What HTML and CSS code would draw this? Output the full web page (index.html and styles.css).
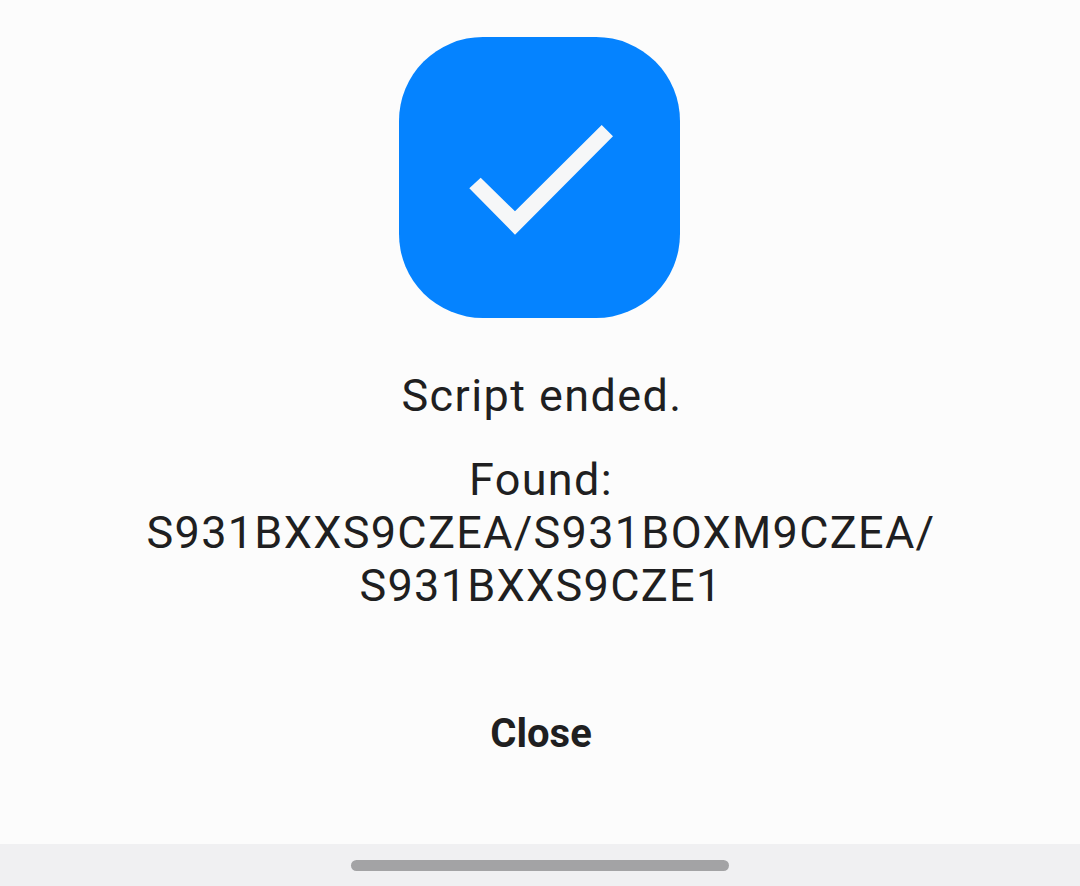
FILE: index.html
```html
<!DOCTYPE html>
<html lang="en">
<head>
<meta charset="utf-8">
<title>Script ended</title>
<link rel="stylesheet" href="styles.css">
</head>
<body>
<main class="dialog">
  <svg class="badge" width="281" height="281" viewBox="0 0 281 281" aria-hidden="true">
    <rect class="badge-bg" width="281" height="281" rx="84" ry="84"/>
    <polygon class="badge-check" points="70.3,151.3 81.7,140.7 116,174.3 202.7,88 214,99.3 116,197.7"/>
  </svg>
  <p class="title">Script ended.</p>
  <p class="message">Found:<br>S931BXXS9CZEA/S931BOXM9CZEA/<br>S931BXXS9CZE1</p>
  <button class="close" type="button">Close</button>
</main>
<footer class="navbar"><span class="handle"></span></footer>
</body>
</html>
```
FILE: styles.css
```css
* { box-sizing: border-box; }
html, body { margin: 0; height: 100%; }
body {
  display: flex;
  flex-direction: column;
  height: 886px;
  overflow: hidden;
  background: #fcfcfc;
  color: #1f1f21;
  font-family: Roboto, sans-serif;
}
.dialog {
  flex: 1;
  display: flex;
  flex-direction: column;
  align-items: center;
  padding-top: 37px;
  padding-left: 2px;
}
.badge { display: block; margin-right: 3px; }
.badge-bg { fill: #0583ff; }
.badge-check { fill: #f6f7f8; }
.title {
  margin: 51px 0 0 2px;
  font-size: 45px;
  line-height: 54px;
  letter-spacing: 1.4px;
}
.message {
  margin: 30px 0 0;
  font-size: 45px;
  line-height: 53px;
  letter-spacing: 1.3px;
  text-align: center;
}
.close {
  margin-top: 97px;
  padding: 0;
  border: 0;
  background: none;
  color: inherit;
  font: 700 40px/50px Roboto, sans-serif;
}
.navbar {
  height: 42px;
  background: #f0f0f2;
  display: flex;
  justify-content: center;
  padding-top: 16px;
}
.handle {
  width: 378px;
  height: 11px;
  border-radius: 6px;
  background: #a3a3a5;
}
```
